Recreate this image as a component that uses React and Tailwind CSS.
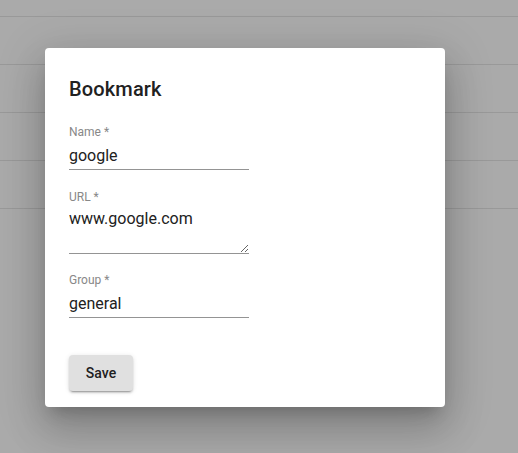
import React from "react";

function Field({ label, value, multiline, className = "" }) {
  return (
    <div className={"w-[180px] flex flex-col " + className}>
      <label className="text-[12px] leading-[14px] text-[#888888]">{label} *</label>
      {multiline ? (
        <textarea
          defaultValue={value}
          rows={2}
          className="mt-[2px] pt-[3px] pb-[6px] text-[16px] leading-[19px] text-[#212121] border-b border-[#949494] outline-none resize-y bg-transparent"
        />
      ) : (
        <input
          defaultValue={value}
          className="mt-0 pt-[6px] pb-[4px] h-[31px] text-[16px] leading-[19px] text-[#212121] border-b border-[#949494] outline-none bg-transparent"
        />
      )}
    </div>
  );
}

export default function App() {
  const rows = [0, 1, 2, 3];
  return (
    <div className="relative w-full h-[453px] overflow-hidden bg-[#aaaaaa]" style={{ fontFamily: "Roboto, 'Liberation Sans', sans-serif" }}>
      {/* list behind the backdrop */}
      <div className="flex flex-col">
        <div className="h-[17px] border-b border-[#999999]" />
        {rows.map((r) => (
          <div key={r} className="h-[48px] border-b border-[#999999]" />
        ))}
      </div>

      <div className="absolute inset-0 flex items-start pt-[48px] pl-[45px]">
        <div className="w-[400px] h-[359px] bg-white rounded-[4px] shadow-[0_11px_15px_-7px_rgba(0,0,0,0.2),0_24px_38px_3px_rgba(0,0,0,0.14),0_9px_46px_8px_rgba(0,0,0,0.12)] px-[24px] pt-[28px] flex flex-col">
          <h2 className="text-[20px] leading-[26px] font-medium text-[#212121] tracking-[0.15px]">Bookmark</h2>
          <div className="mt-[23px] flex flex-col gap-[19px]">
            <Field label="Name" value="google" className="mb-[1px]" />
            <Field label="URL" value="www.google.com" multiline />
            <Field label="Group" value="general" />
          </div>
          <button className="mt-[37px] w-[64px] h-[36px] rounded-[4px] bg-[#e0e0e0] text-[14px] font-medium text-[#212121] shadow-[0_3px_1px_-2px_rgba(0,0,0,0.2),0_2px_2px_0_rgba(0,0,0,0.14),0_1px_5px_0_rgba(0,0,0,0.12)]">
            Save
          </button>
        </div>
      </div>
    </div>
  );
}
